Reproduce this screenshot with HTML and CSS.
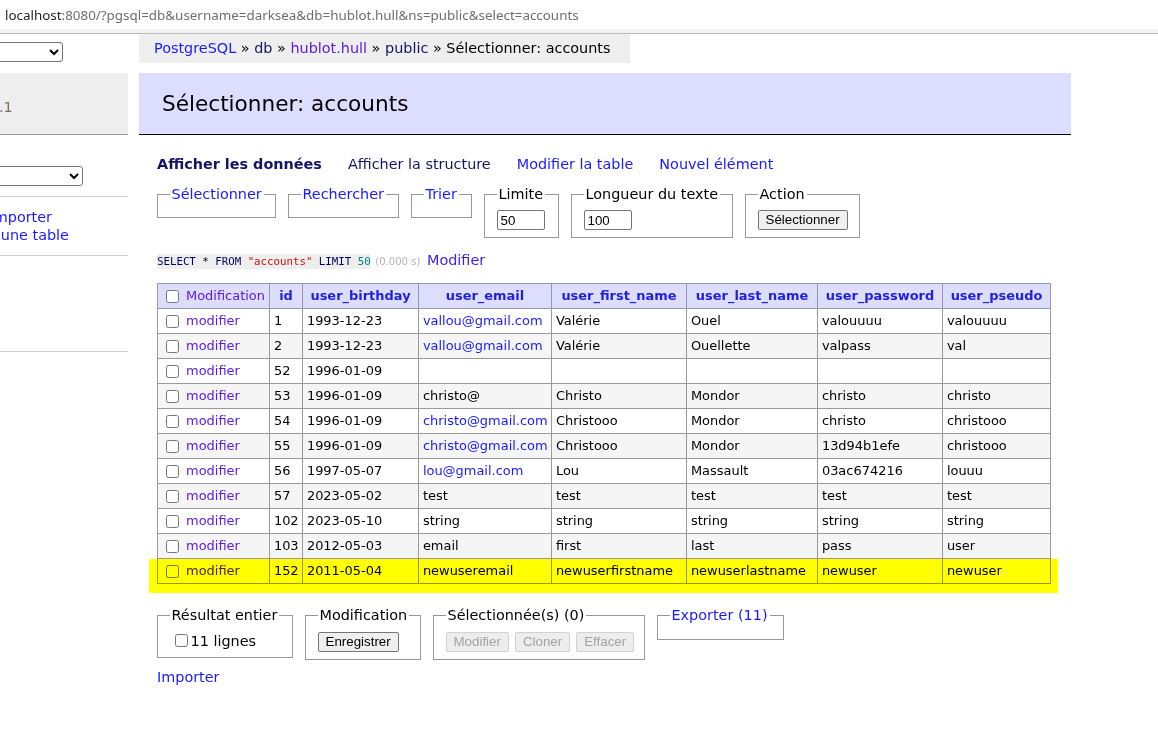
FILE: index.html
```html
<!DOCTYPE html>
<html lang="fr">
<head>
<meta charset="utf-8">
<title>Sélectionner: accounts - Adminer</title>
<link rel="stylesheet" href="styles.css">
</head>
<body>
<div class="urlbar"><span class="host">localhost</span><span class="rest">:8080/?pgsql=db&amp;username=darksea&amp;db=hublot.hull&amp;ns=public&amp;select=accounts</span></div>
<div class="urlbar-edge"></div>
<div class="page">
  <aside class="menu">
    <select class="driver-select"><option>PostgreSQL</option></select>
    <h1 class="logo"><a href="#" class="logo-link">Adminer</a> <span class="version">4.8.1</span></h1>
    <select class="db-select"><option>hublot.hull</option></select>
    <hr>
    <div class="links">
      <div class="links-line1"><a href="#">Importer</a></div>
      <div class="links-line2"><a href="#">Créer une table</a></div>
    </div>
    <hr>
    <hr class="hr-tables">
  </aside>

  <main class="content">
    <p class="breadcrumb"><a href="#" class="blue">PostgreSQL</a> » <a href="#" class="navy">db</a> » <a href="#" class="purple">hublot.hull</a> » <a href="#" class="navy">public</a> » Sélectionner: accounts</p>
    <h2 class="title">Sélectionner: accounts</h2>

    <div class="inner">
      <p class="tabs">
        <a href="#" class="navy tab-active">Afficher les données</a>
        <a href="#" class="navy">Afficher la structure</a>
        <a href="#" class="blue">Modifier la table</a>
        <a href="#" class="blue">Nouvel élément</a>
      </p>

      <form class="filters">
        <fieldset class="fs-select"><legend><a href="#" class="blue">Sélectionner</a></legend></fieldset>
        <fieldset class="fs-search"><legend><a href="#" class="blue">Rechercher</a></legend></fieldset>
        <fieldset class="fs-sort"><legend><a href="#" class="blue">Trier</a></legend></fieldset>
        <fieldset class="fs-limit"><legend>Limite</legend><input type="text" value="50"></fieldset>
        <fieldset class="fs-length"><legend>Longueur du texte</legend><input type="text" value="100"></fieldset>
        <fieldset class="fs-action"><legend>Action</legend><button type="button">Sélectionner</button></fieldset>
      </form>

      <p class="sql"><code class="query"><span class="kw">SELECT</span> * <span class="kw">FROM</span> <span class="str">"accounts"</span> <span class="kw">LIMIT</span> <span class="num">50</span></code> <span class="time">(0.000 s)</span> <a href="#" class="blue-purple sql-edit">Modifier</a></p>

      <div class="table-wrap">
        <table class="data">
          <colgroup>
            <col class="c-mod"><col class="c-id"><col class="c-bd"><col class="c-email"><col class="c-first"><col class="c-last"><col class="c-pass"><col class="c-pseudo">
          </colgroup>
          <thead>
            <tr>
              <th class="th-mod"><input type="checkbox"> <a href="#" class="purple">Modification</a></th>
              <th>id</th>
              <th>user_birthday</th>
              <th>user_email</th>
              <th>user_first_name</th>
              <th>user_last_name</th>
              <th>user_password</th>
              <th>user_pseudo</th>
            </tr>
          </thead>
          <tbody>
            <tr><td><input type="checkbox"> <a href="#" class="purple">modifier</a></td><td>1</td><td>1993-12-23</td><td><a href="#" class="blue">vallou@gmail.com</a></td><td>Valérie</td><td>Ouel</td><td>valouuuu</td><td>valouuuu</td></tr>
            <tr class="odd"><td><input type="checkbox"> <a href="#" class="purple">modifier</a></td><td>2</td><td>1993-12-23</td><td><a href="#" class="blue">vallou@gmail.com</a></td><td>Valérie</td><td>Ouellette</td><td>valpass</td><td>val</td></tr>
            <tr><td><input type="checkbox"> <a href="#" class="purple">modifier</a></td><td>52</td><td>1996-01-09</td><td></td><td></td><td></td><td></td><td></td></tr>
            <tr class="odd"><td><input type="checkbox"> <a href="#" class="purple">modifier</a></td><td>53</td><td>1996-01-09</td><td>christo@</td><td>Christo</td><td>Mondor</td><td>christo</td><td>christo</td></tr>
            <tr><td><input type="checkbox"> <a href="#" class="purple">modifier</a></td><td>54</td><td>1996-01-09</td><td><a href="#" class="blue">christo@gmail.com</a></td><td>Christooo</td><td>Mondor</td><td>christo</td><td>christooo</td></tr>
            <tr class="odd"><td><input type="checkbox"> <a href="#" class="purple">modifier</a></td><td>55</td><td>1996-01-09</td><td><a href="#" class="blue">christo@gmail.com</a></td><td>Christooo</td><td>Mondor</td><td>13d94b1efe</td><td>christooo</td></tr>
            <tr><td><input type="checkbox"> <a href="#" class="purple">modifier</a></td><td>56</td><td>1997-05-07</td><td><a href="#" class="blue">lou@gmail.com</a></td><td>Lou</td><td>Massault</td><td>03ac674216</td><td>louuu</td></tr>
            <tr class="odd"><td><input type="checkbox"> <a href="#" class="purple">modifier</a></td><td>57</td><td>2023-05-02</td><td>test</td><td>test</td><td>test</td><td>test</td><td>test</td></tr>
            <tr><td><input type="checkbox"> <a href="#" class="purple">modifier</a></td><td>102</td><td>2023-05-10</td><td>string</td><td>string</td><td>string</td><td>string</td><td>string</td></tr>
            <tr class="odd"><td><input type="checkbox"> <a href="#" class="purple">modifier</a></td><td>103</td><td>2012-05-03</td><td>email</td><td>first</td><td>last</td><td>pass</td><td>user</td></tr>
            <tr><td><input type="checkbox"> <a href="#" class="purple">modifier</a></td><td>152</td><td>2011-05-04</td><td>newuseremail</td><td>newuserfirstname</td><td>newuserlastname</td><td>newuser</td><td>newuser</td></tr>
          </tbody>
        </table>
        <div class="highlight"></div>
      </div>

      <div class="actions">
        <fieldset class="fs-all"><legend>Résultat entier</legend><label class="all-rows"><input type="checkbox">11 lignes</label></fieldset>
        <fieldset class="fs-edit"><legend>Modification</legend><button type="button">Enregistrer</button></fieldset>
        <fieldset class="fs-selected"><legend>Sélectionnée(s) (0)</legend>
          <div class="btn-row"><button type="button" disabled>Modifier</button><button type="button" disabled>Cloner</button><button type="button" disabled>Effacer</button></div>
        </fieldset>
        <fieldset class="fs-export"><legend><a href="#" class="blue">Exporter (11)</a></legend></fieldset>
      </div>

      <p class="import"><a href="#" class="blue">Importer</a></p>
    </div>
  </main>
</div>
</body>
</html>
```

FILE: styles.css
```css
* { box-sizing: border-box; }

html, body {
  margin: 0;
  background: #fff;
}

body {
  width: 1158px;
  height: 736px;
  overflow: hidden;
  font-family: "DejaVu Sans", Verdana, sans-serif;
  font-size: 14.4px;
  line-height: 18px;
  color: #000;
}

a { text-decoration: none; color: #1a1aff; }
a.blue { color: #1a1aff; }
a.navy { color: #141466; }
a.purple { color: #5a1ee6; }
a.blue-purple { color: #3a1ef0; }

/* browser address bar */
.urlbar {
  height: 29px;
  padding-left: 5px;
  display: flex;
  align-items: center;
  font-family: "Noto Sans", "Open Sans", sans-serif;
  font-size: 13.4px;
  color: #6e6e6e;
  white-space: nowrap;
}
.urlbar .host { color: #1e1e1e; }
.urlbar-edge {
  height: 5px;
  background: #f2f2f2;
  border-bottom: 1px solid #b9b9b9;
}

.page {
  display: flex;
  gap: 11px;
}

/* left menu (horizontally scrolled, only its right part visible) */
.menu {
  width: 128px;
  flex: none;
  overflow: hidden;
}
.menu select {
  display: block;
  height: 20px;
  font: 13.33px "Liberation Sans", Arial, sans-serif;
  border: 1px solid #767676;
  border-radius: 3px;
  background: #fff;
  color: #000;
}
.driver-select { width: 150px; margin: 8px 0 0 -87px; }
.db-select { width: 170px; margin: 31px 0 0 -87px; }

.logo {
  margin: 11px 0 0;
  height: 62px;
  padding-top: 18.5px;
  background: #eee;
  border-bottom: 1px solid #999;
  font-size: 21.6px;
  line-height: 26px;
  font-weight: normal;
  white-space: nowrap;
  text-indent: -122px;
}
.logo-link { color: #1a1aff; }
.version { color: #7a7068; font-size: 14.5px; }

.menu hr {
  margin: 10px 0 0;
  height: 0;
  border: 0;
  border-top: 1px solid #cdcdcd;
}
.links {
  margin-top: 11px;
  white-space: nowrap;
}
.links-line1 { margin-left: -10.5px; }
.links-line2 { margin-left: -43px; }
.links + hr { margin-top: 11px; }
.menu hr.hr-tables { margin-top: 95px; }

/* main content */
.content {
  width: 932px;
  flex: none;
}
.breadcrumb {
  margin: 0;
  width: fit-content;
  height: 29px;
  line-height: 29px;
  padding: 0 19px 0 15px;
  background: #eee;
  white-space: nowrap;
  color: #000;
}
.title {
  margin: 10px 0 0;
  height: 62px;
  padding-left: 23px;
  display: flex;
  align-items: center;
  background: #ddf;
  border-bottom: 1px solid #000;
  font-size: 21.6px;
  font-weight: normal;
}

.inner { padding-left: 18px; }

.tabs {
  margin: 20px 0 0;
  display: flex;
  gap: 26px;
}
.tab-active { font-weight: bold; }

fieldset {
  margin: 0;
  min-width: 0;
  flex: none;
  padding: 7.2px 11.5px;
  border: 1px solid #999;
  white-space: nowrap;
}
legend {
  padding: 0 2px;
  line-height: 18px;
}
.fs-select { width: 119px; }
.fs-search { width: 111px; }
.fs-sort { width: 61px; }
.fs-limit { width: 75px; }
.fs-length { width: 162px; }
.fs-action { width: 115px; }
.fs-all { width: 136px; }
.fs-edit { width: 116px; }
.fs-selected { width: 212px; }
.fs-export { width: 127px; }

.filters {
  margin-top: 12px;
  display: flex;
  gap: 12px;
  align-items: flex-start;
}
input[type="text"] {
  display: block;
  width: 48px;
  height: 20px;
  padding: 1px 3px;
  font: 13.33px "Liberation Sans", Arial, sans-serif;
  border: 1px solid #767676;
  border-radius: 2px;
  color: #000;
}
button {
  display: block;
  height: 20px;
  padding: 0 7px;
  font: 13.33px "Liberation Sans", Arial, sans-serif;
  line-height: 18px;
  color: #000;
  background: #efefef;
  border: 1px solid #767676;
  border-radius: 2px;
}
button:disabled {
  color: #a3a3a3;
  background: #ededed;
  border-color: #d2d2d2;
}

.sql {
  margin: 13px 0 0;
  white-space: nowrap;
}
.query {
  font-family: "DejaVu Sans Mono", monospace;
  font-size: 10.75px;
  background: #eee;
  padding: 1px 0;
  color: #000;
}
.query .kw { color: #000060; }
.query .str { color: #d01010; }
.query .num { color: #008080; }
.time { color: #b5b5b5; font-size: 10.08px; }
.sql-edit { margin-left: 2px; }

/* data table */
.table-wrap {
  position: relative;
  margin-top: 12px;
  width: fit-content;
}
.data {
  border-collapse: collapse;
  table-layout: fixed;
  width: 894px;
  font-size: 12.96px;
  line-height: 24px;
}
.data col.c-mod { width: 112px; }
.data col.c-id { width: 33px; }
.data col.c-bd { width: 116px; }
.data col.c-email { width: 133px; }
.data col.c-first { width: 135px; }
.data col.c-last { width: 131px; }
.data col.c-pass { width: 125px; }
.data col.c-pseudo { width: 108px; }
.data th, .data td {
  border: 1px solid #999;
  padding: 0 3.9px;
  white-space: nowrap;
  overflow: hidden;
  text-align: left;
}
.data th {
  background: #ddf;
  text-align: center;
  font-weight: bold;
  color: #2121e0;
}
.data th.th-mod { text-align: left; font-weight: normal; }
.data tr.odd td { background: #f5f5f5; }
.data input[type="checkbox"] {
  width: 13px;
  height: 13px;
  margin: 0 3px 0 4px;
  vertical-align: middle;
}

.highlight {
  position: absolute;
  left: -8px;
  top: 276px;
  width: 909px;
  height: 34px;
  background: #ffff00;
  mix-blend-mode: multiply;
  pointer-events: none;
}

/* bottom actions */
.actions {
  margin-top: 22px;
  display: flex;
  gap: 12px;
  align-items: flex-start;
}
.all-rows {
  display: flex;
  align-items: center;
  height: 18px;
}
.all-rows input {
  width: 13px;
  height: 13px;
  margin: 0 3px 0 5px;
}
.btn-row {
  display: flex;
  gap: 6px;
}
.import { margin: 8px 0 0; }
```
